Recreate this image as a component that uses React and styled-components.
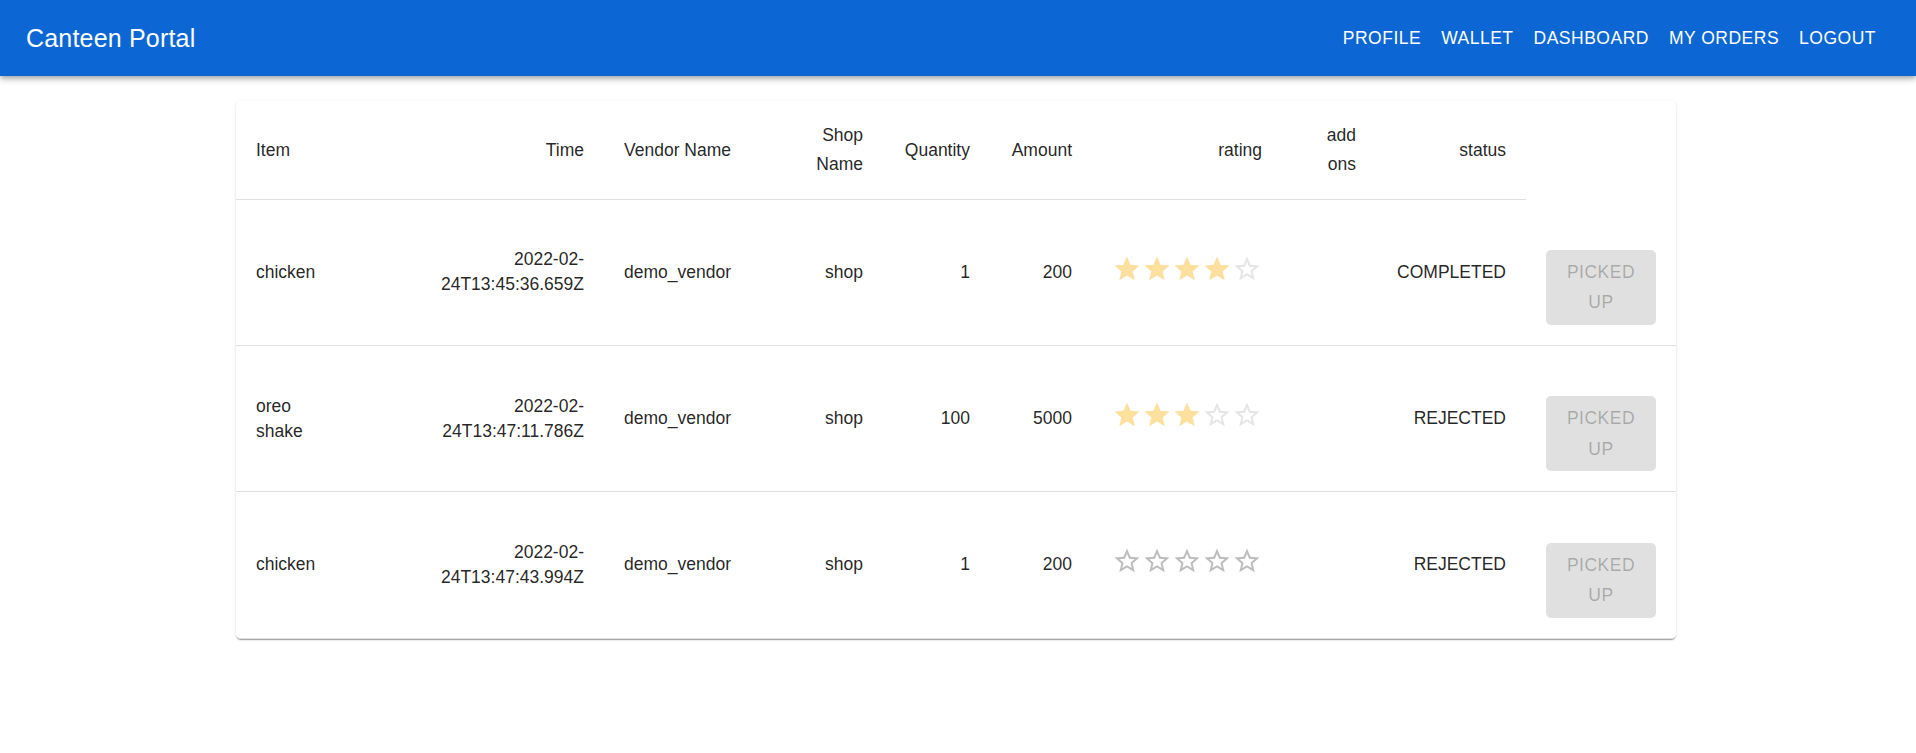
import React from "react";
import styled, { createGlobalStyle } from "styled-components";

const GlobalStyle = createGlobalStyle`
  html, body { margin: 0; padding: 0; background: #ffffff; }
  body {
    font-family: "Liberation Sans", Arial, Helvetica, sans-serif;
    color: rgba(0, 0, 0, 0.87);
  }
  * { box-sizing: border-box; }
`;

const Page = styled.div`
  min-height: 753px;
  background: #ffffff;
`;

const AppBar = styled.header`
  display: flex;
  align-items: center;
  justify-content: space-between;
  height: 76px;
  padding: 0 30px 0 26px;
  background: #0c67d5;
  color: #ffffff;
  box-shadow: 0px 2px 4px -1px rgba(0, 0, 0, 0.2),
    0px 4px 5px 0px rgba(0, 0, 0, 0.14), 0px 1px 10px 0px rgba(0, 0, 0, 0.12);
`;

const Title = styled.div`
  font-size: 25px;
  font-weight: 500;
  line-height: 1.6;
  letter-spacing: 0.0075em;
`;

const Nav = styled.nav`
  display: flex;
  align-items: center;
`;

const NavButton = styled.button`
  background: transparent;
  border: 0;
  color: #ffffff;
  font-family: "Liberation Sans", Arial, Helvetica, sans-serif;
  font-size: 17.5px;
  font-weight: 500;
  line-height: 1.75;
  letter-spacing: 0.02857em;
  text-transform: uppercase;
  padding: 7.5px 10px;
  border-radius: 5px;
  cursor: pointer;
`;

const Container = styled.main`
  width: 1440px;
  margin: 25px 0 0 calc(50% - 722px);
`;

const Card = styled.div`
  background: #ffffff;
  border-radius: 5px;
  overflow: hidden;
  box-shadow: 0px 2px 1px -1px rgba(0, 0, 0, 0.2),
    0px 1px 1px 0px rgba(0, 0, 0, 0.14), 0px 1px 3px 0px rgba(0, 0, 0, 0.12);
`;

const Table = styled.table`
  width: 100%;
  table-layout: fixed;
  border-collapse: collapse;
  border-spacing: 0;
`;

const Col = styled.col`
  width: ${(p) => p.$w}px;
`;

const HeadCell = styled.th`
  padding: 20px;
  font-size: 17.5px;
  font-weight: 500;
  line-height: 29px;
  text-align: ${(p) => p.$align || "left"};
  vertical-align: middle;
  color: rgba(0, 0, 0, 0.87);
  border-bottom: 1px solid rgb(224, 224, 224);
`;

const Row = styled.tr``;

const Cell = styled.td`
  padding: 20px;
  font-size: 17.5px;
  font-weight: 400;
  line-height: 1.43;
  text-align: ${(p) => p.$align || "left"};
  vertical-align: middle;
  color: rgba(0, 0, 0, 0.87);
  border-bottom: 1px solid rgb(224, 224, 224);
`;

const ActionCell = styled(Cell)`
  padding-top: 50.6px;
`;

const ActionWrap = styled.div`
  display: flex;
`;

const PickButton = styled.button`
  min-width: 80px;
  padding: 6.75px 20px;
  border: 0;
  border-radius: 5px;
  background: rgba(0, 0, 0, 0.12);
  color: rgba(0, 0, 0, 0.26);
  font-family: "Liberation Sans", Arial, Helvetica, sans-serif;
  font-size: 17.5px;
  font-weight: 500;
  line-height: 1.75;
  letter-spacing: 0.02857em;
  text-transform: uppercase;
  text-align: center;
  cursor: default;
`;

const Stars = styled.span`
  display: inline-flex;
  opacity: ${(p) => (p.$disabled ? 0.38 : 1)};
`;

const StarSvg = styled.svg`
  display: block;
  width: 30px;
  height: 30px;
  fill: ${(p) => (p.$filled ? "#faaf00" : "rgba(0, 0, 0, 0.26)")};
`;

const STAR_FULL =
  "M12 17.27L18.18 21l-1.64-7.03L22 9.24l-7.19-.61L12 2 9.19 8.63 2 9.24l5.46 4.73L5.82 21z";
const STAR_BORDER =
  "M22 9.24l-7.19-.62L12 2 9.19 8.63 2 9.24l5.46 4.73L5.82 21 12 17.27 18.18 21l-1.63-7.03L22 9.24zM12 15.4l-3.76 2.27 1-4.28-3.32-2.88 4.38-.38L12 6.1l1.71 4.04 4.38.38-3.32 2.88 1 4.28L12 15.4z";

function Rating({ value, disabled }) {
  return (
    <Stars $disabled={disabled}>
      {[1, 2, 3, 4, 5].map((i) => (
        <StarSvg key={i} viewBox="0 0 24 24" $filled={i <= value}>
          <path d={i <= value ? STAR_FULL : STAR_BORDER} />
        </StarSvg>
      ))}
    </Stars>
  );
}

const widths = [120, 248, 168, 111, 107, 102, 190, 94, 150, 150];

const headers = [
  { label: "Item", align: "left" },
  { label: "Time", align: "right" },
  { label: "Vendor Name", align: "left" },
  { label: "Shop Name", align: "right" },
  { label: "Quantity", align: "right" },
  { label: "Amount", align: "right" },
  { label: "rating", align: "right" },
  { label: "add ons", align: "right" },
  { label: "status", align: "right" },
];

const orders = [
  {
    item: "chicken",
    date: "2022-02-",
    time: "24T13:45:36.659Z",
    vendor: "demo_vendor",
    shop: "shop",
    qty: 1,
    amount: 200,
    rating: 4,
    disabled: true,
    status: "COMPLETED",
  },
  {
    item: "oreo shake",
    date: "2022-02-",
    time: "24T13:47:11.786Z",
    vendor: "demo_vendor",
    shop: "shop",
    qty: 100,
    amount: 5000,
    rating: 3,
    disabled: true,
    status: "REJECTED",
  },
  {
    item: "chicken",
    date: "2022-02-",
    time: "24T13:47:43.994Z",
    vendor: "demo_vendor",
    shop: "shop",
    qty: 1,
    amount: 200,
    rating: 0,
    disabled: false,
    status: "REJECTED",
  },
];

export default function App() {
  return (
    <Page>
      <GlobalStyle />
      <AppBar>
        <Title>Canteen Portal</Title>
        <Nav>
          {["Profile", "Wallet", "Dashboard", "My Orders", "Logout"].map((n) => (
            <NavButton key={n}>{n}</NavButton>
          ))}
        </Nav>
      </AppBar>
      <Container>
        <Card>
          <Table>
            <colgroup>
              {widths.map((w, i) => (
                <Col key={i} $w={w} />
              ))}
            </colgroup>
            <thead>
              <Row>
                {headers.map((h) => (
                  <HeadCell key={h.label} $align={h.align}>
                    {h.label}
                  </HeadCell>
                ))}
              </Row>
            </thead>
            <tbody>
              {orders.map((o, idx) => (
                <Row key={idx}>
                  <Cell>{o.item}</Cell>
                  <Cell $align="right">
                    {o.date}
                    <wbr />
                    {o.time}
                  </Cell>
                  <Cell>{o.vendor}</Cell>
                  <Cell $align="right">{o.shop}</Cell>
                  <Cell $align="right">{o.qty}</Cell>
                  <Cell $align="right">{o.amount}</Cell>
                  <Cell>
                    <Rating value={o.rating} disabled={o.disabled} />
                  </Cell>
                  <Cell $align="right"></Cell>
                  <Cell $align="right">{o.status}</Cell>
                  <ActionCell>
                    <ActionWrap>
                      <PickButton disabled>Picked up</PickButton>
                    </ActionWrap>
                  </ActionCell>
                </Row>
              ))}
            </tbody>
          </Table>
        </Card>
      </Container>
    </Page>
  );
}
